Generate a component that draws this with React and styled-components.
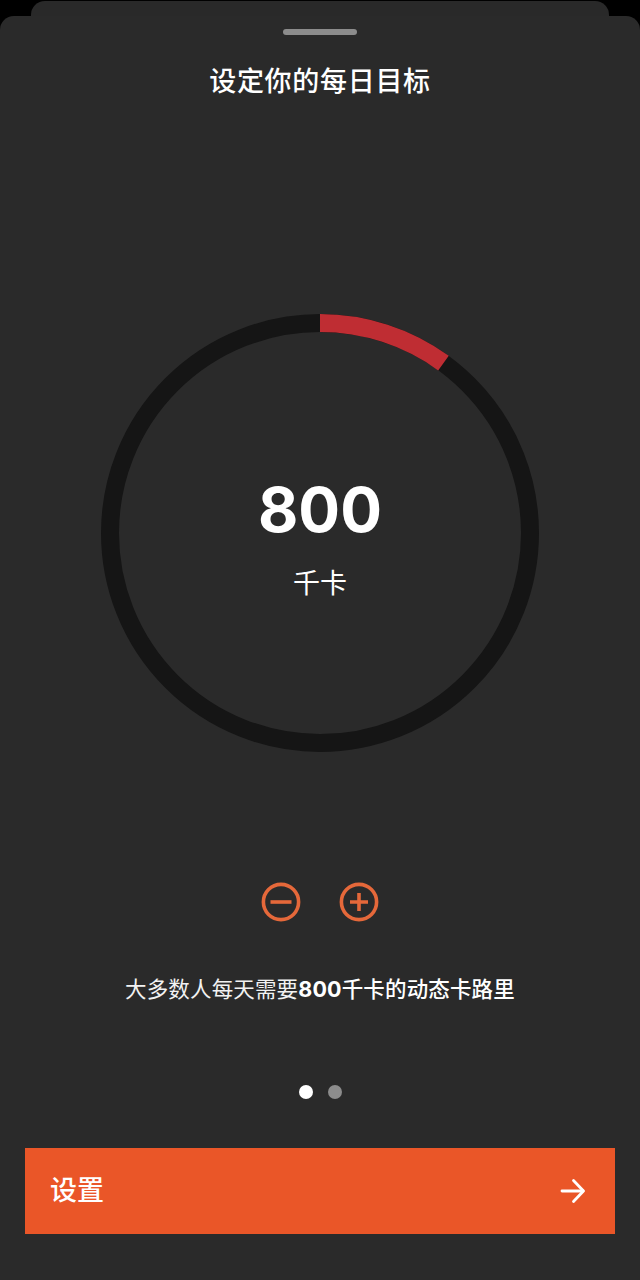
import React from 'react';
import styled, { createGlobalStyle } from 'styled-components';

const GlobalStyle = createGlobalStyle`
  html, body {
    margin: 0;
    padding: 0;
    background: #000;
  }
  * {
    box-sizing: border-box;
  }
`;

const CJK = `Inter, "Noto Sans CJK SC", sans-serif`;

const Screen = styled.div`
  width: 640px;
  height: 1280px;
  padding-top: 1px;
  overflow: hidden;
  background: #000;
  font-family: ${CJK};
  color: #fff;
`;

const BackCard = styled.div`
  height: 15px;
  margin: 0 31px;
  background: #292929;
  border-radius: 14px 14px 0 0;
`;

const Sheet = styled.div`
  height: 1264px;
  background: #2a2a2a;
  border-radius: 14px 14px 0 0;
  display: flex;
  flex-direction: column;
  align-items: center;
  padding-top: 13px;
`;

const Handle = styled.div`
  width: 74px;
  height: 6px;
  border-radius: 3px;
  background: #8c8c8c;
`;

const Title = styled.h1`
  margin: 27px 0 0;
  height: 39px;
  line-height: 39px;
  font-size: 27px;
  font-weight: 500;
  letter-spacing: 0.7px;
`;

const Dial = styled.div`
  position: relative;
  width: 438px;
  height: 438px;
  margin-top: 213px;
`;

const DialCenter = styled.div`
  position: absolute;
  inset: 0;
  display: flex;
  flex-direction: column;
  align-items: center;
  padding-top: 157px;
`;

const Value = styled.div`
  height: 78px;
  line-height: 78px;
  font-size: 62px;
  font-weight: 700;
`;

const Unit = styled.div`
  margin-top: 17px;
  height: 36px;
  line-height: 36px;
  font-size: 27px;
  font-weight: 400;
`;

const Stepper = styled.div`
  display: flex;
  gap: 38px;
  margin-top: 130px;
`;

const StepButton = styled.button`
  width: 40px;
  height: 40px;
  padding: 0;
  border: 0;
  background: none;
  display: block;
`;

const Hint = styled.p`
  margin: 50px 0 1px;
  height: 34px;
  line-height: 34px;
  font-size: 21.5px;
  font-weight: 400;
  color: #f2f2f2;
  letter-spacing: 0.15px;

  strong {
    font-weight: 500;
    color: #fff;
  }

  b {
    font-weight: 700;
  }
`;

const Dots = styled.div`
  display: flex;
  gap: 15px;
  margin-top: 78px;
`;

const Dot = styled.span`
  width: 14px;
  height: 14px;
  border-radius: 50%;
  background: ${({ $active }) => ($active ? '#fff' : '#8c8c8c')};
`;

const SetButton = styled.button`
  width: 590px;
  height: 86px;
  margin-top: 49px;
  padding: 0 29px 0 25px;
  border: 0;
  border-radius: 0;
  background: #ea5628;
  color: #fff;
  font-family: inherit;
  font-size: 27px;
  font-weight: 500;
  display: flex;
  align-items: center;
  justify-content: space-between;
`;

const SetLabel = styled.span`
  padding-bottom: 6px;
`;

const Ring = () => {
  const r = 210;
  const c = 2 * Math.PI * r;
  return (
    <svg width="438" height="438" viewBox="0 0 438 438">
      <circle cx="219" cy="219" r={r} fill="none" stroke="#151515" strokeWidth="18" />
      <circle
        cx="219"
        cy="219"
        r={r}
        fill="none"
        stroke="#bf2d33"
        strokeWidth="18"
        strokeDasharray={`${c * 0.1} ${c * 0.9}`}
        transform="rotate(-90 219 219)"
      />
    </svg>
  );
};

const StepIcon = ({ plus }) => (
  <svg width="40" height="40" viewBox="0 0 40 40" fill="none" stroke="#e5683a" strokeWidth="3.6">
    <circle cx="20" cy="20" r="17.6" />
    {plus ? <path d="M11 20h18M20 11v18" /> : <path d="M9.5 20h21" />}
  </svg>
);

const ArrowIcon = () => (
  <svg width="26" height="26" viewBox="0 0 26 26" fill="none" stroke="#fff" strokeWidth="2.8" strokeLinecap="round" strokeLinejoin="round">
    <path d="M2 13h21" />
    <path d="M13.5 2.5L23.5 13 13.5 23.5" />
  </svg>
);

const App = () => {
  return (
    <>
      <GlobalStyle />
      <Screen>
        <BackCard />
        <Sheet>
          <Handle />
          <Title>设定你的每日目标</Title>
          <Dial>
            <Ring />
            <DialCenter>
              <Value>800</Value>
              <Unit>千卡</Unit>
            </DialCenter>
          </Dial>
          <Stepper>
            <StepButton aria-label="减少"><StepIcon /></StepButton>
            <StepButton aria-label="增加"><StepIcon plus /></StepButton>
          </Stepper>
          <Hint>大多数人每天需要<strong><b>800</b>千卡的动态卡路里</strong></Hint>
          <Dots>
            <Dot $active />
            <Dot />
          </Dots>
          <SetButton>
            <SetLabel>设置</SetLabel>
            <ArrowIcon />
          </SetButton>
        </Sheet>
      </Screen>
    </>
  );
};

export default App;
